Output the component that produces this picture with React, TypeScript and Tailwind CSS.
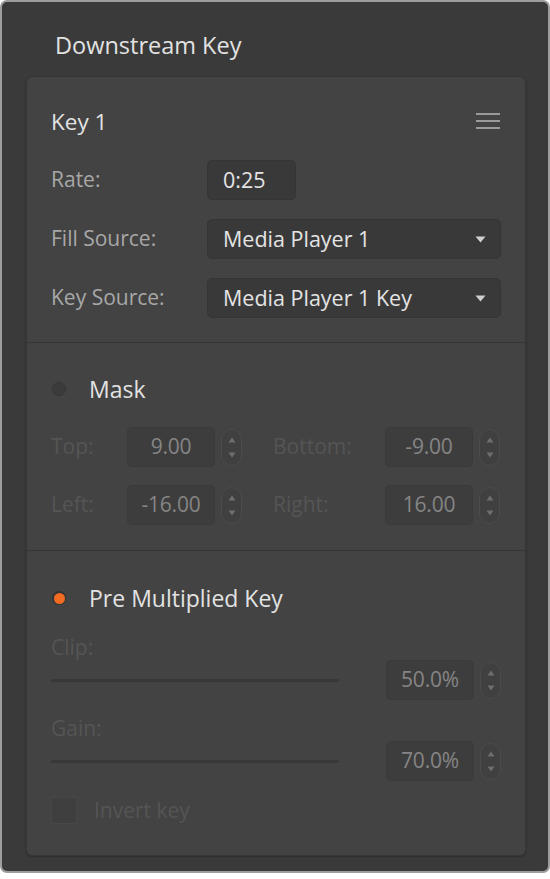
import React from "react";

const font = { fontFamily: '"Open Sans", "Noto Sans", sans-serif' };

function Stepper() {
  return (
    <div className="flex h-[37px] w-[21px] shrink-0 flex-col items-center justify-center gap-[9px] rounded-full border border-[#4c4c4c] bg-[#404040]">
      <svg width="8" height="6" viewBox="0 0 8 6">
        <path d="M4 0.5 L7.5 5.5 L0.5 5.5 Z" fill="#6e6e6e" />
      </svg>
      <svg width="8" height="6" viewBox="0 0 8 6">
        <path d="M0.5 0.5 L7.5 0.5 L4 5.5 Z" fill="#6e6e6e" />
      </svg>
    </div>
  );
}

function NumField({ value }: { value: string }) {
  return (
    <div className="flex items-center gap-[6px]">
      <div className="flex h-10 w-[88px] items-center justify-center rounded-[5px] border border-[#3a3a3a] bg-[#3d3d3d] text-[21px] tracking-[-0.2px] text-[#858585]">
        {value}
      </div>
      <Stepper />
    </div>
  );
}

function Select({ value }: { value: string }) {
  return (
    <div className="flex h-10 flex-1 items-center justify-between rounded-[5px] border border-[#353535] bg-[#393939] pl-[15px] pr-[14px] text-[21.5px] text-[#e4e4e4]">
      <span>{value}</span>
      <svg width="11" height="7" viewBox="0 0 11 7">
        <path d="M0.5 0.5 L10.5 0.5 L5.5 6.5 Z" fill="#d0d0d0" />
      </svg>
    </div>
  );
}

function Slider() {
  return <div className="h-[3px] w-[288px] rounded-full bg-[#383838]" />;
}

export default function App() {
  return (
    <div className="bg-white" style={font}>
      <div className="flex h-[873px] w-[550px] flex-col overflow-hidden rounded-[7px] border-2 border-[#9d9d9d] bg-[#3a3a3a]">
        {/* Title */}
        <div className="flex h-[74px] items-center pl-[53px] pt-[14px] text-[23.5px] text-[#e2e2e2]">
          Downstream Key
        </div>

        {/* Panel */}
        <div className="ml-[24px] flex h-[780px] w-[500px] flex-col rounded-[6px] border border-[#363636] bg-[#434343] shadow-[0_1px_2px_rgba(0,0,0,0.25)]">
          {/* Key 1 section */}
          <div className="px-[24px] pt-[30px] pb-[24px]">
            <div className="flex h-[30px] items-center justify-between">
              <span className="text-[22.5px] text-[#e2e2e2]">Key 1</span>
              <div className="mr-[1px] -mt-[3px] flex w-[24px] flex-col gap-[5px]">
                <div className="h-[2px] bg-[#9a9a9a]" />
                <div className="h-[2px] bg-[#9a9a9a]" />
                <div className="h-[2px] bg-[#9a9a9a]" />
              </div>
            </div>
            <div className="mt-[23px] flex flex-col gap-[19px] text-[21px] text-[#a8a8a8]">
              <div className="flex items-center">
                <span className="w-[156px]">Rate:</span>
                <div className="flex h-10 w-[89px] items-center rounded-[5px] border border-[#353535] bg-[#393939] pl-[15px] text-[21.5px] text-[#e4e4e4]">
                  0:25
                </div>
              </div>
              <div className="flex items-center">
                <span className="w-[156px]">Fill Source:</span>
                <Select value="Media Player 1" />
              </div>
              <div className="flex items-center">
                <span className="w-[156px]">Key Source:</span>
                <Select value="Media Player 1 Key" />
              </div>
            </div>
          </div>

          <div className="h-px bg-[#363636]" />

          {/* Mask section */}
          <div className="px-[24px] pt-[31px] pb-[25px]">
            <div className="flex h-[30px] items-center">
              <div className="ml-[1px] h-[14px] w-[14px] rounded-full border border-[#363636] bg-[#3b3b3b]" />
              <span className="ml-[23px] text-[23px] text-[#e2e2e2]">Mask</span>
            </div>
            <div className="mt-[23px] flex flex-col gap-[18px] text-[21px] text-[#555555]">
              <div className="flex items-center">
                <span className="w-[76px]">Top:</span>
                <NumField value="9.00" />
                <span className="ml-[31px] w-[112px]">Bottom:</span>
                <NumField value="-9.00" />
              </div>
              <div className="flex items-center">
                <span className="w-[76px]">Left:</span>
                <NumField value="-16.00" />
                <span className="ml-[31px] w-[112px]">Right:</span>
                <NumField value="16.00" />
              </div>
            </div>
          </div>

          <div className="h-px bg-[#363636]" />

          {/* Pre multiplied key section */}
          <div className="px-[24px] pt-[32px]">
            <div className="flex h-[30px] items-center">
              <div className="ml-[1px] flex h-[14px] w-[14px] items-center justify-center rounded-full bg-[#333333]">
                <div className="h-[11px] w-[11px] rounded-full bg-[#f26b23]" />
              </div>
              <span className="ml-[23px] text-[23px] text-[#e2e2e2]">Pre Multiplied Key</span>
            </div>

            <div className="mt-[23px] text-[21px] text-[#555555]">
              <div className="flex h-[24px] items-center">Clip:</div>
              <div className="flex items-center justify-between">
                <Slider />
                <NumField value="50.0%" />
              </div>

              <div className="mt-[17px] flex h-[24px] items-center">Gain:</div>
              <div className="flex items-center justify-between">
                <Slider />
                <NumField value="70.0%" />
              </div>

              <div className="mt-[16px] flex h-[27px] items-center">
                <div className="h-[27px] w-[26px] rounded-[3px] border border-[#474747] bg-[#3f3f3f]" />
                <span className="ml-[17px]">Invert key</span>
              </div>
            </div>
          </div>
        </div>
      </div>
    </div>
  );
}
